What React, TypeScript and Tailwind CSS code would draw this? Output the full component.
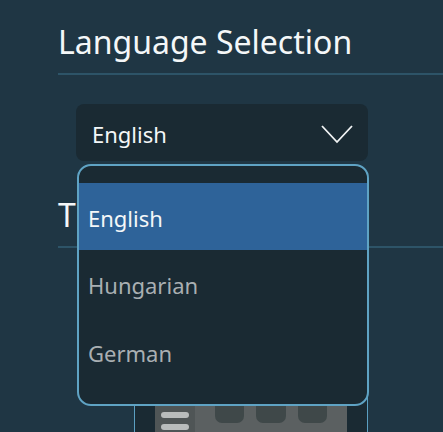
import React from 'react';

const languages = ['English', 'Hungarian', 'German'];

const Chevron = () => (
  <svg width="32" height="20" viewBox="0 0 32 20" fill="none">
    <path d="M1 2 L16 18 L31 2" stroke="#f2f4f5" strokeWidth="1.8" strokeLinejoin="miter" />
  </svg>
);

// small layout preview shown in the theme section
const ThemePreview = () => (
  <div className="flex h-[60px] w-[192px] bg-[#5b6061]">
    <div className="flex w-[40px] flex-col items-center gap-[6px] bg-[#4f5556] pt-[9px]">
      <div className="h-[6px] w-[28px] rounded-full bg-[#b9bcbc]" />
      <div className="h-[6px] w-[28px] rounded-full bg-[#b9bcbc]" />
    </div>
    <div className="grid flex-1 grid-cols-3 gap-x-[12px] gap-y-[9px] px-[20px]">
      {[0, 1, 2, 3, 4, 5].map((i) => (
        <div key={i} className="h-[20px] rounded-b-[7px] bg-[#3f4849]" />
      ))}
    </div>
  </div>
);

export default function App() {
  const selected = 'English';

  return (
    <div
      className="relative h-[432px] w-[443px] overflow-hidden bg-[#1f3644]"
      style={{ fontFamily: '"Noto Sans", "Open Sans", sans-serif' }}
    >
      <div className="pl-[58px] pt-[20px]">
        <h2 className="text-[32px] leading-[44px] text-[#f4f7f8]">Language Selection</h2>
        <div className="mt-[9px] h-[2px] bg-[#2d5468]" />

        <div className="ml-[18px] mt-[29px] flex h-[57px] w-[292px] items-center justify-between rounded-[8px] bg-[#1a2a33] pl-[16px] pr-[15px] pt-[3px]">
          <span className="text-[22px] text-[#f4f7f8]">{selected}</span>
          <Chevron />
        </div>

        <h2 className="mt-[32px] text-[32px] leading-[44px] text-[#f4f7f8]">Theme</h2>
        <div className="mt-[9px] h-[2px] bg-[#2d5468]" />

        <div className="ml-[76px] mt-[20px] w-[234px] rounded-[10px] border border-[#5b9fc1] bg-[#1a2a33] px-[20px] pt-[134px]">
          <ThemePreview />
        </div>
      </div>

      {/* open language list */}
      <div className="absolute left-[77px] top-[164px] h-[242px] w-[292px] overflow-hidden rounded-[14px] border-2 border-[#5fa3c4] bg-[#1a2a33] pt-[17px]">
        {languages.map((lang) => (
          <div
            key={lang}
            className={
              lang === selected
                ? 'flex h-[67px] items-center bg-[#2e6399] pl-[9px] pt-[3px] text-[22px] text-[#f4f7f8]'
                : 'flex h-[68px] items-center pl-[9px] pt-[3px] text-[22px] text-[#a9afb2]'
            }
          >
            {lang}
          </div>
        ))}
      </div>
    </div>
  );
}
